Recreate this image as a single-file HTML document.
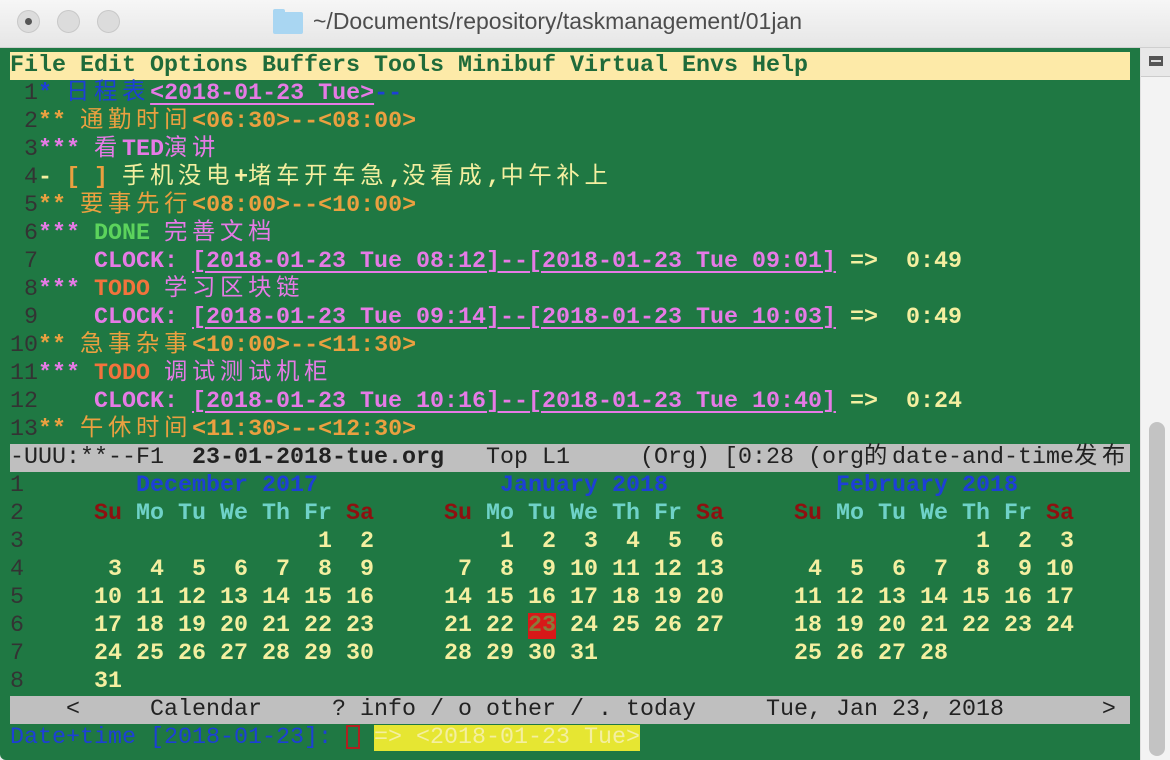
<!DOCTYPE html>
<html><head><meta charset="utf-8"><style>
body{margin:0;width:1170px;height:760px;overflow:hidden;background:#ececec;position:relative;font-family:"Liberation Mono","Noto Sans CJK SC",monospace;}
.tb{position:absolute;left:0;top:0;width:1170px;height:47px;background:linear-gradient(#f6f6f6,#e6e6e6);border-bottom:1px solid #cfcfcf;}
.dot{position:absolute;top:10px;width:23px;height:23px;border-radius:50%;background:#dcdcdc;border:1px solid #c8c8c8;box-sizing:border-box;}
.title{position:absolute;left:313px;top:8px;font-family:"Liberation Sans",sans-serif;font-size:23px;color:#4d4d4d;}
.emacs{position:absolute;left:0;top:48px;width:1140px;height:712px;background:#1f7843;border-bottom-left-radius:6px;}
.sb{position:absolute;left:1140px;top:48px;width:30px;height:712px;background:#f3f3f3;border-left:1px solid #e0e0e0;}
.r{position:absolute;left:10px;height:28px;line-height:28px;white-space:pre;font-size:23.33px;font-weight:bold;color:#f4efa0;overflow:visible;}
.c{font-family:"Noto Sans CJK SC",sans-serif;letter-spacing:4.7px;font-weight:normal;line-height:0;}
.n{color:#333;font-weight:normal}
.b{color:#1d3fd6}.o{color:#eaa040}.p{color:#e67ae6}.y{color:#f4efa0}.g{color:#5cd35c}.t{color:#f2733c}
.u{text-decoration:underline;text-decoration-color:#e67ae6;text-underline-offset:4px;text-decoration-thickness:2px}
.cy{color:#6fd2c8}.rd{color:#8e1010}
.bar{background:#bfbfbf;color:#222;width:1120px}
</style></head><body>
<div class="tb">
<div class="dot" style="left:17px"><div style="position:absolute;left:7px;top:7px;width:7px;height:7px;border-radius:50%;background:#555"></div></div>
<div class="dot" style="left:57px"></div>
<div class="dot" style="left:97px"></div>
<div style="position:absolute;left:273px;top:12px;width:30px;height:22px;background:#a9d6f2;border-radius:2px"></div>
<div style="position:absolute;left:273px;top:9px;width:12px;height:5px;background:#a9d6f2;border-radius:2px 2px 0 0"></div>
<div class="title">~/Documents/repository/taskmanagement/01jan</div>
</div>
<div class="emacs"></div>
<div class="sb">
<div style="position:absolute;left:0;top:0;width:30px;height:28px;background:#e8e8e8;border-bottom:1px solid #ccc"></div>
<div style="position:absolute;left:8px;top:8px;width:14px;height:10px;border:2px solid #555;box-sizing:border-box;background:#555"></div>
<div style="position:absolute;left:10px;top:12px;width:10px;height:2px;background:#ddd"></div>
<div style="position:absolute;left:8px;top:374px;width:16px;height:334px;border-radius:8px;background:#c3c3c3"></div>
</div>

<div class="r" style="top:52px;width:1120px;background:#fdeaa8;color:#1f6b3a;font-weight:bold">File Edit Options Buffers Tools Minibuf Virtual Envs Help</div>

<div class="r" style="top:80px"><span class="n"> 1</span><span class="b">* <span class="c">日程表</span></span><span class="p u">&lt;2018-01-23 Tue&gt;</span><span class="b">--</span></div>
<div class="r" style="top:108px"><span class="n"> 2</span><span class="o">** <span class="c">通勤时间</span>&lt;06:30&gt;--&lt;08:00&gt;</span></div>
<div class="r" style="top:136px"><span class="n"> 3</span><span class="p">*** <span class="c">看</span>TED<span class="c">演讲</span></span></div>
<div class="r" style="top:164px"><span class="n"> 4</span><span class="y">- </span><span class="o">[ ]</span><span class="y"> <span class="c">手机没电</span>+<span class="c">堵车开车急</span>,<span class="c">没看成</span>,<span class="c">中午补上</span></span></div>
<div class="r" style="top:192px"><span class="n"> 5</span><span class="o">** <span class="c">要事先行</span>&lt;08:00&gt;--&lt;10:00&gt;</span></div>
<div class="r" style="top:220px"><span class="n"> 6</span><span class="p">*** </span><span class="g">DONE</span><span class="p"> <span class="c">完善文档</span></span></div>
<div class="r" style="top:248px"><span class="n"> 7</span><span class="p">    CLOCK: <span class="u">[2018-01-23 Tue 08:12]--[2018-01-23 Tue 09:01]</span></span><span class="y"> =&gt;  0:49</span></div>
<div class="r" style="top:276px"><span class="n"> 8</span><span class="p">*** </span><span class="t">TODO</span><span class="p"> <span class="c">学习区块链</span></span></div>
<div class="r" style="top:304px"><span class="n"> 9</span><span class="p">    CLOCK: <span class="u">[2018-01-23 Tue 09:14]--[2018-01-23 Tue 10:03]</span></span><span class="y"> =&gt;  0:49</span></div>
<div class="r" style="top:332px"><span class="n">10</span><span class="o">** <span class="c">急事杂事</span>&lt;10:00&gt;--&lt;11:30&gt;</span></div>
<div class="r" style="top:360px"><span class="n">11</span><span class="p">*** </span><span class="t">TODO</span><span class="p"> <span class="c">调试测试机柜</span></span></div>
<div class="r" style="top:388px"><span class="n">12</span><span class="p">    CLOCK: <span class="u">[2018-01-23 Tue 10:16]--[2018-01-23 Tue 10:40]</span></span><span class="y"> =&gt;  0:24</span></div>
<div class="r" style="top:416px"><span class="n">13</span><span class="o">** <span class="c">午休时间</span>&lt;11:30&gt;--&lt;12:30&gt;</span></div>

<div class="r bar" style="top:444px"><span style="font-weight:normal">-UUU:**--F1  </span>23-01-2018-tue.org<span style="font-weight:normal">   Top L1     (Org) [0:28 (org<span class="c">的</span>date-and-time<span class="c">发布</span></span></div>

<div class="r" style="top:472px"><span class="n">1</span>        <span class="b">December 2017</span>             <span class="b">January 2018</span>            <span class="b">February 2018</span></div>
<div class="r" style="top:500px"><span class="n">2</span>     <span class="rd">Su</span> <span class="cy">Mo Tu We Th Fr</span> <span class="rd">Sa</span>     <span class="rd">Su</span> <span class="cy">Mo Tu We Th Fr</span> <span class="rd">Sa</span>     <span class="rd">Su</span> <span class="cy">Mo Tu We Th Fr</span> <span class="rd">Sa</span></div>
<div class="r" style="top:528px"><span class="n">3</span>                     1  2         1  2  3  4  5  6                  1  2  3</div>
<div class="r" style="top:556px"><span class="n">4</span>      3  4  5  6  7  8  9      7  8  9 10 11 12 13      4  5  6  7  8  9 10</div>
<div class="r" style="top:584px"><span class="n">5</span>     10 11 12 13 14 15 16     14 15 16 17 18 19 20     11 12 13 14 15 16 17</div>
<div class="r" style="top:612px"><span class="n">6</span>     17 18 19 20 21 22 23     21 22 <span style="background:#d81818;color:#8a7a3a">23</span> 24 25 26 27     18 19 20 21 22 23 24</div>
<div class="r" style="top:640px"><span class="n">7</span>     24 25 26 27 28 29 30     28 29 30 31              25 26 27 28</div>
<div class="r" style="top:668px"><span class="n">8</span>     31</div>

<div class="r bar" style="top:696px;font-weight:normal">    &lt;     Calendar     ? info / o other / . today     Tue, Jan 23, 2018       &gt;</div>

<div class="r" style="top:724px;font-weight:normal"><span class="b">Date+time [2018-01-23]: </span><span style="display:inline-block;width:14px;height:24px;border:2px solid #b02020;vertical-align:middle;box-sizing:border-box"></span> <span style="background:#e6e632;color:#f4efa0">=&gt; &lt;2018-01-23 Tue&gt;</span></div>
</body></html>
